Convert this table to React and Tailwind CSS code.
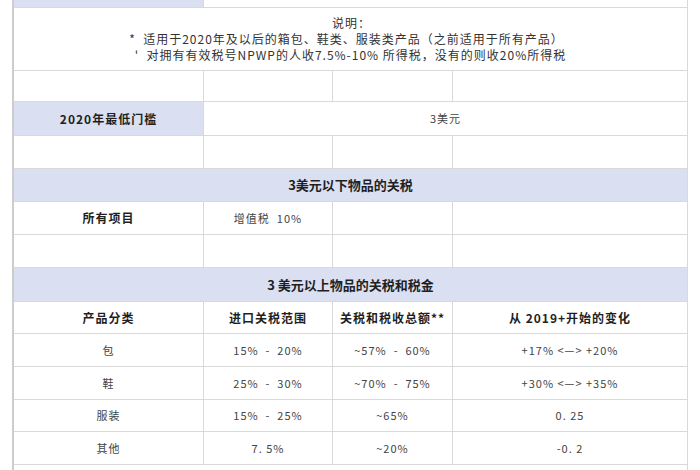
import React from "react";

const COLS = "grid grid-cols-[190px_129px_120px_234px]";
const FONT = { fontFamily: '"Noto Sans CJK SC", "Noto Sans", sans-serif' };

function Cell({ children, className = "", last = false }) {
  return (
    <div
      className={`flex items-center justify-center ${last ? "" : "border-r border-[#d9d9d9]"} ${className}`}
    >
      {children}
    </div>
  );
}

function Row({ h, children, className = "" }) {
  return (
    <div className={`${COLS} ${h} border-b border-[#d9d9d9] ${className}`}>{children}</div>
  );
}

function EmptyRow({ h }) {
  return (
    <Row h={h}>
      <Cell />
      <Cell />
      <Cell />
      <Cell last />
    </Row>
  );
}

const BLUE = "bg-[#dae0f1]";
const bold = "font-bold text-[12px] tracking-[1px] text-[#1f1f1f]";
const data = "text-[11px] tracking-[1px] text-[#444] whitespace-pre";

export default function App() {
  const dataRows = [
    ["包", "15%  -  20%", "~57%  -  60%", "+17% <—> +20%"],
    ["鞋", "25%  -  30%", "~70%  -  75%", "+30% <—> +35%"],
    ["服装", "15%  -  25%", "~65%", "0. 25"],
    ["其他", "7. 5%", "~20%", "-0. 2"],
  ];
  const dataH = ["h-[33px]", "h-[33px]", "h-[32px]", "h-[33px]"];
  return (
    <div className="w-[700px] h-[470px] bg-white overflow-hidden" style={FONT}>
      <div className="ml-[12px] w-[676px] border-l-2 border-l-[#cdcdcd] border-r border-r-[#d9d9d9] h-[470px]">
        {/* cut-off top row */}
        <Row h="h-[8px]">
          <Cell className={BLUE} />
          <Cell className="col-span-3" last />
        </Row>

        {/* notes */}
        <Row h="h-[63px]">
          <div className="col-span-4 flex flex-col items-center justify-center gap-[2px] text-[12px] leading-[14px] tracking-[1px] text-[#333]">
            <div className="pl-[2px]">说明：</div>
            <div className="whitespace-pre pr-[8px]">*  适用于2020年及以后的箱包、鞋类、服装类产品（之前适用于所有产品）</div>
            <div className="whitespace-pre">'  对拥有有效税号NPWP的人收7.5%-10% 所得税，没有的则收20%所得税</div>
          </div>
        </Row>

        <EmptyRow h="h-[31px]" />

        <Row h="h-[34px]">
          <Cell className={`${BLUE} ${bold}`}>2020年最低门槛</Cell>
          <Cell className={`col-span-3 ${data}`} last>
            3美元
          </Cell>
        </Row>

        <EmptyRow h="h-[33px]" />

        <Row h="h-[33px]" className={BLUE}>
          <div className="col-span-4 flex items-center justify-center font-bold text-[13px] text-[#1f1f1f]">
            3美元以下物品的关税
          </div>
        </Row>

        <Row h="h-[33px]">
          <Cell className={bold}>所有项目</Cell>
          <Cell className={data}>增值税  10%</Cell>
          <Cell />
          <Cell last />
        </Row>

        <EmptyRow h="h-[33px]" />

        <Row h="h-[34px]" className={BLUE}>
          <div className="col-span-4 flex items-center justify-center font-bold text-[13px] text-[#1f1f1f]">
            3 美元以上物品的关税和税金
          </div>
        </Row>

        <Row h="h-[32px]">
          <Cell className={bold}>产品分类</Cell>
          <Cell className={bold}>进口关税范围</Cell>
          <Cell className={bold}>关税和税收总额**</Cell>
          <Cell className={bold} last>
            从 2019+开始的变化
          </Cell>
        </Row>

        {dataRows.map((r, i) => (
          <Row h={dataH[i]} key={i}>
            <Cell className={data}>{r[0]}</Cell>
            <Cell className={data}>{r[1]}</Cell>
            <Cell className={data}>{r[2]}</Cell>
            <Cell className={data} last>
              {r[3]}
            </Cell>
          </Row>
        ))}
      </div>
    </div>
  );
}
